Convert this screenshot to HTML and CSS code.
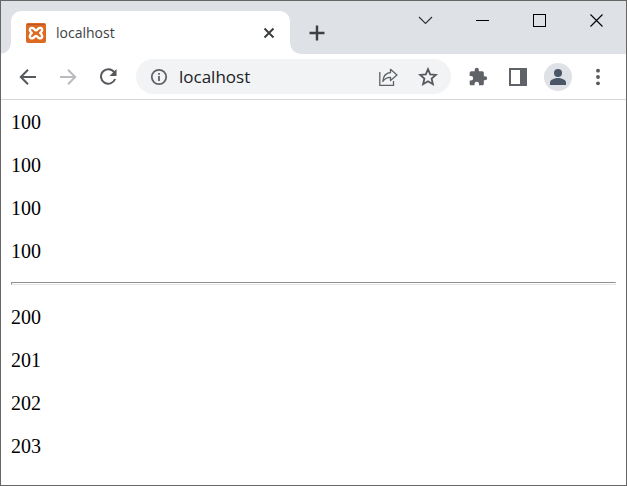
FILE: index.html
```
<!DOCTYPE html>
<html lang="en">
<head>
    <meta charset="UTF-8">
    <meta name="viewport" content="width=device-width, initial-scale=1.0">
    <title>localhost</title>
    <link rel="stylesheet" href="styles.css">
</head>
<body>
    <div class="window">

        <!-- tab strip -->
        <header class="tab-strip">
            <div class="tab">
                <svg class="favicon" width="20" height="20" viewBox="0 0 20 20">
                    <rect width="20" height="20" rx="2" fill="#dd6a20"/>
                    <path d="M1 1.500h18" stroke="#b9562a" stroke-width="1"/>
                    <path d="M6.500 5C4 4.600 3.200 6.600 4.200 8.200L5.800 10L4.200 11.800C3.200 13.600 4 15.600 6.500 15.200C8.500 15 8.300 12.900 10 12.900S11.500 15 13.500 15.200C16 15.600 16.800 13.600 15.800 11.800L14.200 10L15.800 8.200C16.800 6.600 16 4.600 13.500 5C11.500 5.200 11.700 7.300 10 7.300S8.500 5.200 6.500 5Z" fill="none" stroke="#fff" stroke-width="2.400" stroke-linejoin="round"/>
                </svg>
                <span class="tab-title">localhost</span>
                <button class="tab-close" aria-label="Close tab">
                    <svg width="12" height="12" viewBox="0 0 12 12"><path d="M1.500 1.500l9 9M10.500 1.500l-9 9" stroke="#3c4043" stroke-width="2"/></svg>
                </button>
            </div>
            <button class="new-tab" aria-label="New tab">
                <svg width="16" height="16" viewBox="0 0 16 16"><path d="M8 .5v15M.5 8h15" stroke="#3c4043" stroke-width="2.400"/></svg>
            </button>
            <div class="window-controls">
                <button aria-label="Search tabs">
                    <svg width="15" height="15" viewBox="0 0 15 15"><path d="M1 4l6.500 6.500L14 4" fill="none" stroke="#333" stroke-width="1.200"/></svg>
                </button>
                <button aria-label="Minimize">
                    <svg width="13" height="13" viewBox="0 0 13 13"><path d="M0 6.500h13" stroke="#000"/></svg>
                </button>
                <button aria-label="Maximize">
                    <svg width="13" height="13" viewBox="0 0 13 13"><rect x=".5" y=".5" width="12" height="12" fill="none" stroke="#000"/></svg>
                </button>
                <button aria-label="Close">
                    <svg width="13" height="13" viewBox="0 0 13 13"><path d="M.5.5l12 12M12.500.5l-12 12" stroke="#000" stroke-width="1.100"/></svg>
                </button>
            </div>
        </header>

        <!-- toolbar -->
        <nav class="toolbar">
            <button class="tool" aria-label="Back">
                <svg width="18" height="18" viewBox="0 0 18 18"><path d="M17 9H2M9 1.800L1.800 9L9 16.200" fill="none" stroke="#55585c" stroke-width="2"/></svg>
            </button>
            <button class="tool" aria-label="Forward">
                <svg width="18" height="18" viewBox="0 0 18 18"><path d="M1 9h15M9 1.800L16.200 9L9 16.200" fill="none" stroke="#b9bbbe" stroke-width="2"/></svg>
            </button>
            <button class="tool" aria-label="Reload">
                <svg width="18" height="18" viewBox="0 0 18 18"><path d="M15.200 4.200A7.300 7.300 0 1 0 16.100 11" fill="none" stroke="#55585c" stroke-width="2"/><path d="M17.500 1v7h-7z" fill="#55585c"/></svg>
            </button>

            <div class="address-bar">
                <button class="tool" aria-label="Site information">
                    <svg width="18" height="18" viewBox="0 0 18 18"><circle cx="9" cy="9" r="7.200" fill="none" stroke="#5f6368" stroke-width="1.800"/><path d="M9 8v5M9 5v1.800" stroke="#5f6368" stroke-width="1.800"/></svg>
                </button>
                <input class="address" type="text" value="localhost" aria-label="Address">
                <button class="tool" aria-label="Share">
                    <svg width="20" height="20" viewBox="0 0 20 20"><path d="M1.800 5v13.300h13.700V14" fill="none" stroke="#5f6368" stroke-width="1.300"/><path d="M12.500 2.300L19 8l-6.500 5.500V10.300C9 10.200 6.700 11.400 4.800 14.500C5.200 9.300 7.800 6 12.500 5.500Z" fill="none" stroke="#5f6368" stroke-width="1.300" stroke-linejoin="round"/></svg>
                </button>
                <button class="tool" aria-label="Bookmark this page">
                    <svg width="20" height="20" viewBox="0 0 20 20"><path d="M10 2.200l2.200 5.200 5.700.5-4.300 3.700 1.300 5.600-4.900-3-4.900 3 1.300-5.600L2.100 7.900l5.700-.5z" fill="none" stroke="#55585c" stroke-width="1.800"/></svg>
                </button>
            </div>

            <button class="tool" aria-label="Extensions">
                <svg width="20" height="20" viewBox="0 0 24 24"><path d="M20.500 11H19V7c0-1.100-.9-2-2-2h-4V3.500a2.500 2.500 0 0 0-5 0V5H4c-1.100 0-2 .9-2 2v3.800h1.500a2.700 2.700 0 0 1 0 5.400H2V20c0 1.100.9 2 2 2h3.800v-1.500a2.700 2.700 0 0 1 5.400 0V22H17c1.100 0 2-.9 2-2v-4h1.500a2.500 2.500 0 0 0 0-5z" fill="#5f6368"/></svg>
            </button>
            <button class="tool" aria-label="Side panel">
                <svg width="18" height="18" viewBox="0 0 18 18"><path d="M0 0h18v18H0zM2 2v14h9V2z" fill="#5f6368" fill-rule="evenodd"/></svg>
            </button>
            <button class="tool" aria-label="Profile">
                <svg width="28" height="28" viewBox="0 0 28 28"><circle cx="14" cy="14" r="14" fill="#dee1e6"/><circle cx="14" cy="10" r="4" fill="#4a5567"/><path d="M6 22v-2.500c0-3 5-4.500 8-4.500s8 1.500 8 4.500V22z" fill="#4a5567"/></svg>
            </button>
            <button class="tool" aria-label="Menu">
                <svg width="18" height="18" viewBox="0 0 18 18" fill="#55585c"><circle cx="9" cy="2.700" r="1.900"/><circle cx="9" cy="9" r="1.900"/><circle cx="9" cy="15.300" r="1.900"/></svg>
            </button>
        </nav>

        <!-- page output -->
        <main class="page">
            <p>100</p>
            <p>100</p>
            <p>100</p>
            <p>100</p>
            <hr>
            <p>200</p>
            <p>201</p>
            <p>202</p>
            <p>203</p>
        </main>
    </div>
</body>
</html>
```
FILE: styles.css
```
* {
    box-sizing: border-box;
}

body {
    margin: 0;
    background-color: #fff;
}

button {
    display: flex;
    justify-content: center;
    align-items: center;
    flex-shrink: 0;
    padding: 0;
    border: none;
    background: none;
}

.window {
    min-height: 100vh;
    border: 1px solid #666;
}

/* tab strip */
.tab-strip {
    display: flex;
    height: 53px;
    padding: 10px 1px 0 10px;
    background-color: #dee1e6;
}

.tab {
    position: relative;
    display: flex;
    align-items: center;
    flex: 0 1 279px;
    min-width: 120px;
    padding: 0 10px 0 15px;
    border-radius: 10px 10px 0 0;
    background-color: #fff;
}

/* curved feet of the active tab */
.tab::before,
.tab::after {
    content: "";
    position: absolute;
    bottom: 0;
    width: 10px;
    height: 10px;
}

.tab::before {
    right: 100%;
    background: radial-gradient(circle at 0 0, #dee1e6 9px, #fff 10px);
}

.tab::after {
    left: 100%;
    background: radial-gradient(circle at 100% 0, #dee1e6 9px, #fff 10px);
}

.tab-title {
    flex: 1;
    margin-left: 10px;
    font: 14px/20px "Open Sans", sans-serif;
    color: #3c4043;
}

.tab-close {
    width: 22px;
    height: 22px;
}

.new-tab {
    width: 32px;
    height: 43px;
    margin-left: 11px;
}

.window-controls {
    display: flex;
    height: 38px;
    margin-top: -10px;
    margin-left: auto;
}

.window-controls button {
    width: 57px;
}

/* toolbar */
.toolbar {
    display: flex;
    align-items: center;
    height: 46px;
    padding: 0 8px 0 7px;
    border-bottom: 1px solid #d5d7da;
}

.tool {
    width: 40px;
    height: 35px;
}

.address-bar {
    display: flex;
    align-items: center;
    flex: 1;
    min-width: 0;
    height: 35px;
    margin: 0 7px 0 8px;
    padding: 0 3px;
    border-radius: 18px;
    background-color: #f1f3f4;
}

.address {
    flex: 1;
    min-width: 0;
    padding: 0;
    border: none;
    outline: none;
    background: none;
    font: 17px/24px "Open Sans", sans-serif;
    color: #202124;
}

/* page output */
.page {
    padding: 10px 10px 0;
    font: 20px/24px "Liberation Serif", "Times New Roman", serif;
    color: #000;
}

.page p {
    margin: 0 0 19px;
}

.page hr {
    height: 3px;
    margin: 0 0 20px;
    border: 1px solid #e6e6e6;
    border-top-color: #8f8f8f;
    border-left-color: #8f8f8f;
}
```
